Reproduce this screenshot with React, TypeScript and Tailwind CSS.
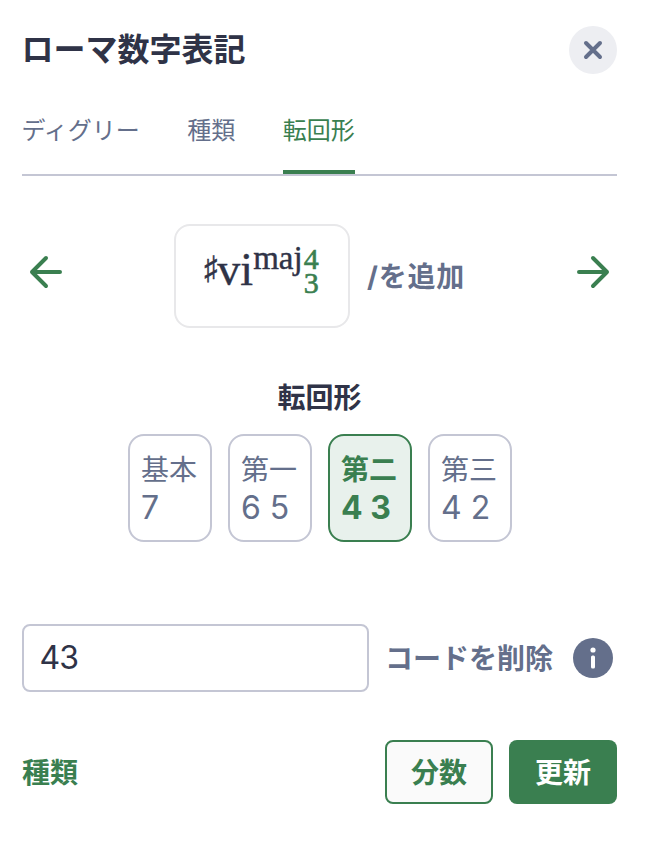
const font = '[font-family:Inter,"Noto_Sans_CJK_JP",sans-serif]';

function Inversion({ label, digits, active }: { label: string; digits: string; active?: boolean }) {
  return (
    <div
      className={
        active
          ? "flex h-[108px] w-[84px] flex-col rounded-[16px] border-2 border-[#3a7f50] bg-[#e8f1ec] pl-[11.5px] pt-[16px] font-bold text-[#3a7f50]"
          : "flex h-[108px] w-[84px] flex-col rounded-[16px] border-2 border-[#c4c6d4] bg-white pl-[11.5px] pt-[16px] text-[#646f8b]"
      }
    >
      <span className="text-[28px] leading-[36px]">{label}</span>
      <span className="text-[32px] leading-[40px]">{digits}</span>
    </div>
  );
}

function Arrow({ left }: { left?: boolean }) {
  return (
    <svg className="mb-[8px]" width="48" height="48" viewBox="0 0 48 48" fill="none" stroke="#3a7f50" strokeWidth="4" strokeLinecap="round" strokeLinejoin="round">
      {left ? <path d="M38 24H10M24 10 10 24l14 14" /> : <path d="M10 24h28M24 10l14 14-14 14" />}
    </svg>
  );
}

export default function App() {
  return (
    <div className={`${font} h-[844px] w-[646px] overflow-hidden bg-white px-[22px] pr-[29px] text-[#2f3347]`}>
      <div className="flex h-[74px] items-end justify-between">
        <h1 className="mb-[4px] ml-[-0.5px] text-[32px] font-bold leading-[40px]">ローマ数字表記</h1>
        <button className="flex h-[48px] w-[48px] items-center justify-center rounded-full bg-[#edeef2]">
          <svg width="24" height="24" viewBox="0 0 24 24" fill="none" stroke="#646f8b" strokeWidth="4" strokeLinecap="round">
            <path d="M5 5l14 14M19 5 5 19" />
          </svg>
        </button>
      </div>

      <div className="mt-[26px] flex h-[76px] gap-[47.5px] border-b-2 border-[#c4c6d4] text-[24px] leading-[61px] text-[#646f8b]">
        <span className="ml-[-0.5px]">ディグリー</span>
        <span>種類</span>
        <span className="h-[74px] w-[72px] whitespace-nowrap border-b-4 border-[#3a7f50] text-[#3a7f50]">転回形</span>
      </div>

      <div className="mt-[48px] flex h-[104px] items-center">
        <Arrow left />
        <div className="ml-[104px] flex h-[104px] w-[176px] justify-center rounded-[16px] border-2 border-[#e8e8ea] pr-[1px] [font-family:'Liberation_Serif',serif]">
          <div className="flex items-start [-webkit-text-stroke:0.4px]">
            <span className="mt-[23px] w-[13px] scale-y-125 text-[26px] leading-[40px] text-[#2f3347]">♯</span>
            <span className="mt-[20.5px] text-[46px] leading-[46px]">vi</span>
            <span className="mt-[15.5px] text-[33px] leading-[32px]">maj</span>
            <span className="ml-[1px] mt-[21px] flex flex-col text-[30px] leading-[24px] text-[#3a7f50] [-webkit-text-stroke:0.6px]">
              <span>4</span>
              <span>3</span>
            </span>
          </div>
        </div>
        <span className="ml-[17px] mt-[2px] text-[28px] font-bold tracking-[0.8px] text-[#646f8b]">/を追加</span>
        <div className="ml-auto">
          <Arrow />
        </div>
      </div>

      <div className="mt-[50px] text-center text-[28px] font-bold leading-[40px]">転回形</div>
      <div className="mt-[16px] flex justify-center gap-[16px]">
        <Inversion label="基本" digits="7" />
        <Inversion label="第一" digits="6 5" />
        <Inversion label="第二" digits="4 3" active />
        <Inversion label="第三" digits="4 2" />
      </div>

      <div className="mt-[82px] flex h-[68px] items-center">
        <div className="flex h-[68px] w-[347px] items-center rounded-[8px] border-2 border-[#c4c6d4] pl-[15.5px] text-[32px] tracking-[-1px]">43</div>
        <span className="ml-[16px] pt-[2px] text-[28px] font-bold text-[#646f8b]">コードを削除</span>
        <svg className="ml-[20px]" width="40" height="40" viewBox="0 0 40 40">
          <circle cx="20" cy="20" r="20" fill="#646f8b" />
          <circle cx="20" cy="12" r="2.6" fill="#fff" />
          <rect x="18" y="17.5" width="4" height="13" rx="1.5" fill="#fff" />
        </svg>
      </div>

      <div className="mt-[48px] flex h-[64px] items-center justify-between">
        <span className="pt-[2px] text-[28px] font-bold text-[#3a7f50]">種類</span>
        <div className="flex gap-[16px]">
          <button className="h-[64px] w-[108px] rounded-[8px] border-2 border-[#3a7f50] bg-[#fafafa] pt-[2px] text-[28px] font-bold text-[#3a7f50]">分数</button>
          <button className="h-[64px] w-[108px] rounded-[8px] bg-[#3a7f50] pt-[2px] text-[28px] font-bold text-white">更新</button>
        </div>
      </div>
    </div>
  );
}
